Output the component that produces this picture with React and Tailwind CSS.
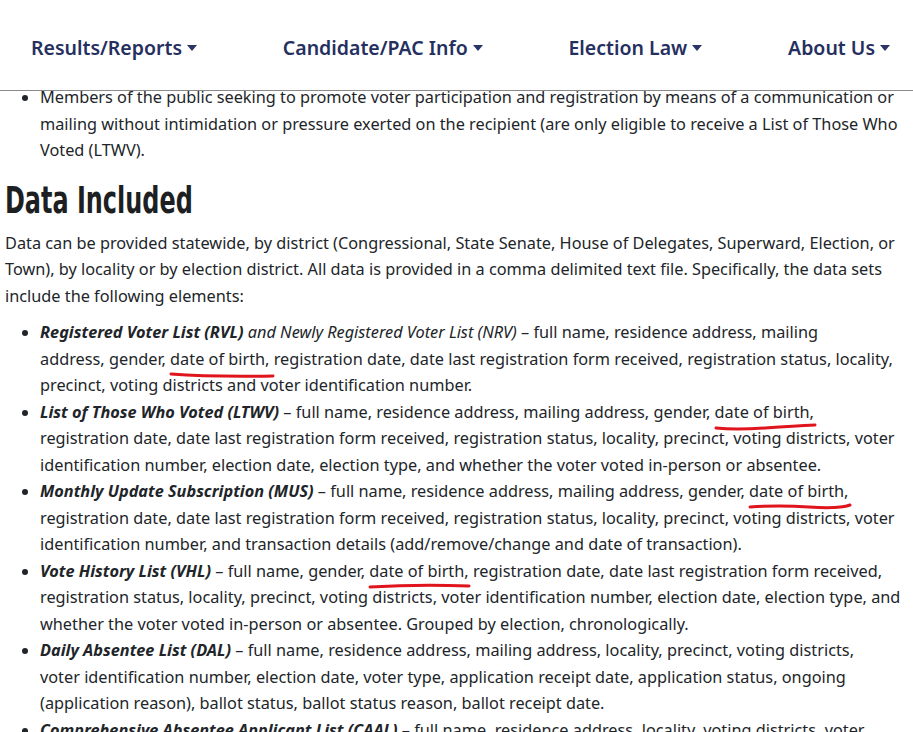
import React from 'react';

const body = { fontFamily: '"Noto Sans", "Open Sans", sans-serif' };
const heading = { fontFamily: '"Liberation Sans Narrow", "DejaVu Sans Condensed", "DejaVu Sans", sans-serif' };

function Caret() {
  return <span className="ml-[5px] inline-block align-middle border-t-[6px] border-x-[5px] border-t-[#2a3466] border-x-transparent" />;
}

function NavItem({ label }) {
  return (
    <a className="flex items-center text-[19.5px] font-semibold text-[#26305f]">
      {label}
      <Caret />
    </a>
  );
}

// hand-drawn red marker stroke under a phrase
function Marked({ children, d }) {
  return (
    <span className="relative">
      {children}
      <svg className="absolute left-0 -bottom-[8px] w-[104px] h-[10px] overflow-visible" viewBox="0 0 104 10">
        <path d={d} fill="none" stroke="#e0141c" strokeWidth="3" strokeLinecap="round" />
      </svg>
    </span>
  );
}

const dob = (d) => <Marked d={d}>date of birth,</Marked>;

// each entry keeps the line breaks of the original page
function Lines({ lines }) {
  return lines.map((l, i) => (
    <React.Fragment key={i}>
      {l}
      {i < lines.length - 1 && <br />}
    </React.Fragment>
  ));
}

const B = ({ children }) => <b><i>{children}</i></b>;

export default function App() {
  return (
    <div className="relative w-[913px] h-[732px] overflow-hidden bg-white text-[#212529]" style={body}>
      <header className="absolute top-0 left-0 right-0 z-10 h-[91px] bg-white border-b border-[#8a8a8a] flex items-center justify-between pl-[31px] pr-[23px] pt-[6px]">
        <NavItem label="Results/Reports" />
        <NavItem label="Candidate/PAC Info" />
        <NavItem label="Election Law" />
        <NavItem label="About Us" />
      </header>

      <main className="pt-[84px] px-[5px] text-[16.3px] leading-[26.5px] whitespace-nowrap">
        <ul className="list-disc pl-[35px]">
          <li>
            <Lines lines={[
              'Members of the public seeking to promote voter participation and registration by means of a communication or',
              'mailing without intimidation or pressure exerted on the recipient (are only eligible to receive a List of Those Who',
              'Voted (LTWV).',
            ]} />
          </li>
        </ul>

        <h2 className="mt-[12px] mb-[6px] text-[38px] leading-[48px] font-bold text-[#1d1f22]" style={heading}>
          <span className="inline-block origin-left scale-x-[0.7]">Data Included</span>
        </h2>

        <p className="mb-[10px]">
          <Lines lines={[
            'Data can be provided statewide, by district (Congressional, State Senate, House of Delegates, Superward, Election, or',
            'Town), by locality or by election district. All data is provided in a comma delimited text file. Specifically, the data sets',
            'include the following elements:',
          ]} />
        </p>

        <ul className="list-disc pl-[35px]">
          <li>
            <Lines lines={[
              <><B>Registered Voter List (RVL)</B> <i>and Newly Registered Voter List (NRV)</i> – full name, residence address, mailing</>,
              <>address, gender, {dob('M1 6 Q40 9 103 8')} registration date, date last registration form received, registration status, locality,</>,
              'precinct, voting districts and voter identification number.',
            ]} />
          </li>
          <li>
            <Lines lines={[
              <><B>List of Those Who Voted (LTWV)</B> – full name, residence address, mailing address, gender, {dob('M1 7 Q20 9 50 7 T100 4')}</>,
              'registration date, date last registration form received, registration status, locality, precinct, voting districts, voter',
              'identification number, election date, election type, and whether the voter voted in-person or absentee.',
            ]} />
          </li>
          <li>
            <Lines lines={[
              <><B>Monthly Update Subscription (MUS)</B> – full name, residence address, mailing address, gender, {dob('M1 7 Q30 5 60 7 T101 5')}</>,
              'registration date, date last registration form received, registration status, locality, precinct, voting districts, voter',
              'identification number, and transaction details (add/remove/change and date of transaction).',
            ]} />
          </li>
          <li>
            <Lines lines={[
              <><B>Vote History List (VHL)</B> – full name, gender, {dob('M1 7 Q50 4 100 6')} registration date, date last registration form received,</>,
              'registration status, locality, precinct, voting districts, voter identification number, election date, election type, and',
              'whether the voter voted in-person or absentee. Grouped by election, chronologically.',
            ]} />
          </li>
          <li>
            <Lines lines={[
              <><B>Daily Absentee List (DAL)</B> – full name, residence address, mailing address, locality, precinct, voting districts,</>,
              'voter identification number, election date, voter type, application receipt date, application status, ongoing',
              '(application reason), ballot status, ballot status reason, ballot receipt date.',
            ]} />
          </li>
          <li>
            <Lines lines={[
              <><B>Comprehensive Absentee Applicant List (CAAL)</B> – full name, residence address, locality, voting districts, voter</>,
              'identification number, election date, voter type, application receipt date, application status.',
            ]} />
          </li>
        </ul>
      </main>
    </div>
  );
}
